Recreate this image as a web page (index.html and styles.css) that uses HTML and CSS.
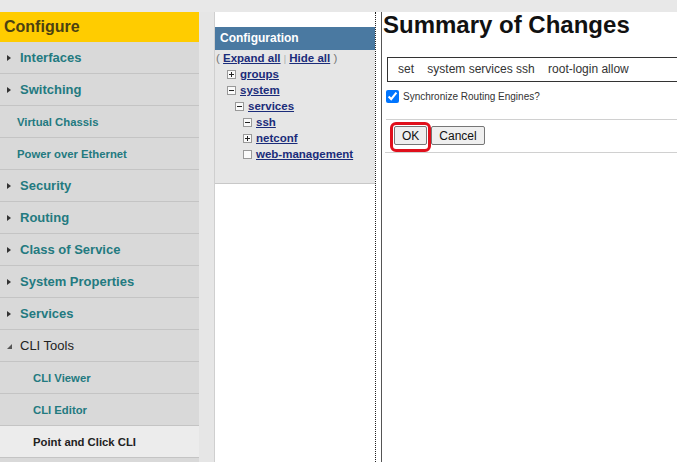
FILE: index.html
```html
<!DOCTYPE html>
<html lang="en">
<head>
    <meta charset="UTF-8">
    <title>Configure - Point and Click CLI</title>
    <link rel="stylesheet" href="styles.css">
</head>
<body>
    <div class="topbar"></div>
    <div class="layout">
        <!-- left navigation -->
        <div class="nav">
            <div class="nav-head">Configure</div>
            <div class="nav-item"><span class="arrow"></span>Interfaces</div>
            <div class="nav-item"><span class="arrow"></span>Switching</div>
            <div class="nav-item sub">Virtual Chassis</div>
            <div class="nav-item sub">Power over Ethernet</div>
            <div class="nav-item"><span class="arrow"></span>Security</div>
            <div class="nav-item"><span class="arrow"></span>Routing</div>
            <div class="nav-item"><span class="arrow"></span>Class of Service</div>
            <div class="nav-item"><span class="arrow"></span>System Properties</div>
            <div class="nav-item"><span class="arrow"></span>Services</div>
            <div class="nav-item open"><span class="arrow-open"></span>CLI Tools</div>
            <div class="nav-item sub2">CLI Viewer</div>
            <div class="nav-item sub2">CLI Editor</div>
            <div class="nav-item sub2 active">Point and Click CLI</div>
            <div class="nav-item"></div>
        </div>

        <div class="gutter"></div>

        <!-- configuration tree -->
        <div class="tree-panel">
            <div class="tree-head">Configuration</div>
            <div class="tree-box">
                <div class="tree-links">( <a href="#">Expand all</a> <span class="sep">|</span> <a href="#">Hide all</a> )</div>
                <ul class="tree">
                    <li><span class="box plus"></span><a href="#">groups</a></li>
                    <li><span class="box minus"></span><a href="#">system</a>
                        <ul>
                            <li><span class="box minus"></span><a href="#">services</a>
                                <ul>
                                    <li><span class="box minus"></span><a href="#">ssh</a></li>
                                    <li><span class="box plus"></span><a href="#">netconf</a></li>
                                    <li><span class="box"></span><a href="#">web-management</a></li>
                                </ul>
                            </li>
                        </ul>
                    </li>
                </ul>
            </div>
        </div>

        <!-- summary -->
        <div class="content">
            <div class="content-inner">
                <h1>Summary of Changes</h1>
                <div class="changes">set    system services ssh    root-login allow</div>
                <label class="sync"><input type="checkbox" checked> Synchronize Routing Engines?</label>
                <div class="actions">
                    <button class="btn btn-ok">OK</button>
                    <button class="btn">Cancel</button>
                    <span class="highlight"></span>
                </div>
            </div>
        </div>
    </div>
</body>
</html>
```

FILE: styles.css
```css
body {
    margin: 0;
    background-color: #e8e8e8;
    font-family: "Liberation Sans", Arial, sans-serif;
    overflow: hidden;
    height: 462px;
}
.topbar {
    height: 12px;
}
.layout {
    display: flex;
    height: 450px;
    overflow: hidden;
}

/* left nav */
.nav {
    width: 199px;
    flex-shrink: 0;
    background-color: #d9d9d9;
    overflow: hidden;
}
.nav-head {
    height: 30px;
    line-height: 30px;
    background-color: #ffcc00;
    color: #4b4112;
    font-size: 16px;
    font-weight: bold;
    padding-left: 4px;
}
.nav-item {
    height: 31px;
    border-bottom: 1px solid #c4c4c4;
    display: flex;
    align-items: center;
    padding-left: 7px;
    font-size: 13px;
    font-weight: bold;
    color: #237a80;
}
.nav-item.sub {
    padding-left: 17px;
    font-size: 11.3px;
}
.nav-item.sub2 {
    padding-left: 33px;
    font-size: 11.3px;
}
.nav-item.open {
    font-weight: normal;
    color: #222;
}
.nav-item.active {
    background-color: #ececec;
    color: #222;
}
.arrow {
    width: 0;
    height: 0;
    border-left: 4px solid #333;
    border-top: 3px solid transparent;
    border-bottom: 3px solid transparent;
    margin-right: 9px;
}
.arrow-open {
    width: 0;
    height: 0;
    border-bottom: 5px solid #555;
    border-left: 5px solid transparent;
    margin-right: 8px;
    margin-top: 2px;
}

.gutter {
    width: 15px;
    flex-shrink: 0;
    background-color: #e6e6e6;
    border-right: 1px solid #cfcfcf;
}

/* tree */
.tree-panel {
    width: 160px;
    flex-shrink: 0;
    background-color: #fff;
    border-right: 1px dotted #222;
    padding-top: 15px;
}
.tree-head {
    height: 23px;
    line-height: 23px;
    background-color: #4a79a1;
    color: #fff;
    font-size: 12px;
    font-weight: bold;
    padding-left: 5px;
}
.tree-box {
    background-color: #e6e6e6;
    border-bottom: 1px solid #c8c8c8;
    padding: 1px 0 21px 1px;
    font-size: 11.5px;
    font-weight: bold;
    color: #777;
}
.tree-box a {
    color: #1b2c7a;
    text-decoration: underline;
}
.tree-links {
    line-height: 14px;
    font-weight: normal;
}
.tree-links a {
    font-weight: bold;
}
.sep {
    color: #aaa;
    font-size: 9px;
}
.tree, .tree ul {
    list-style: none;
    margin: 0;
    padding: 0 0 0 8px;
}
.tree {
    padding-left: 11px;
}
.tree li {
    line-height: 16px;
}
.box {
    display: inline-block;
    width: 7px;
    height: 7px;
    border: 1px solid #999;
    background-color: #fafafa;
    margin-right: 4px;
    position: relative;
    vertical-align: -1px;
}
.box.plus::before, .box.minus::before {
    content: "";
    position: absolute;
    left: 1px;
    top: 3px;
    width: 5px;
    height: 1px;
    background-color: #222;
}
.box.plus::after {
    content: "";
    position: absolute;
    left: 3px;
    top: 1px;
    width: 1px;
    height: 5px;
    background-color: #222;
}

/* summary */
.content {
    flex: 1;
    background-color: #fff;
    padding-left: 5px;
    overflow: hidden;
}
.content-inner {
    border-left: 1px solid #555;
    height: 100%;
    padding-left: 1px;
}
h1 {
    margin: 0;
    font-size: 24px;
    line-height: 26px;
    color: #111;
}
.changes {
    margin: 19px 0 0 4px;
    width: 320px;
    height: 23px;
    line-height: 23px;
    border: 1px solid #333;
    padding-left: 10px;
    font-size: 12px;
    color: #333;
    white-space: pre;
}
.sync {
    display: flex;
    align-items: center;
    margin: 8px 0 0 3px;
    font-size: 10px;
    color: #333;
    padding-bottom: 16px;
    border-bottom: 1px solid #d0d0d0;
}
.sync input {
    width: 13px;
    height: 13px;
    margin: 0 4px 0 0;
}
.actions {
    position: relative;
    display: flex;
    gap: 4px;
    margin-left: 2px;
    padding: 6px 0 7px 9px;
    border-bottom: 1px solid #d0d0d0;
}
.btn {
    height: 19px;
    padding: 0 7px;
    font-family: "Liberation Sans", Arial, sans-serif;
    font-size: 12px;
    color: #111;
    background-color: #efefef;
    border: 1px solid #767676;
    border-radius: 2px;
}
.highlight {
    position: absolute;
    left: 5px;
    top: 2px;
    width: 35px;
    height: 24px;
    border: 3px solid #e0101c;
    border-radius: 6px;
}
```
